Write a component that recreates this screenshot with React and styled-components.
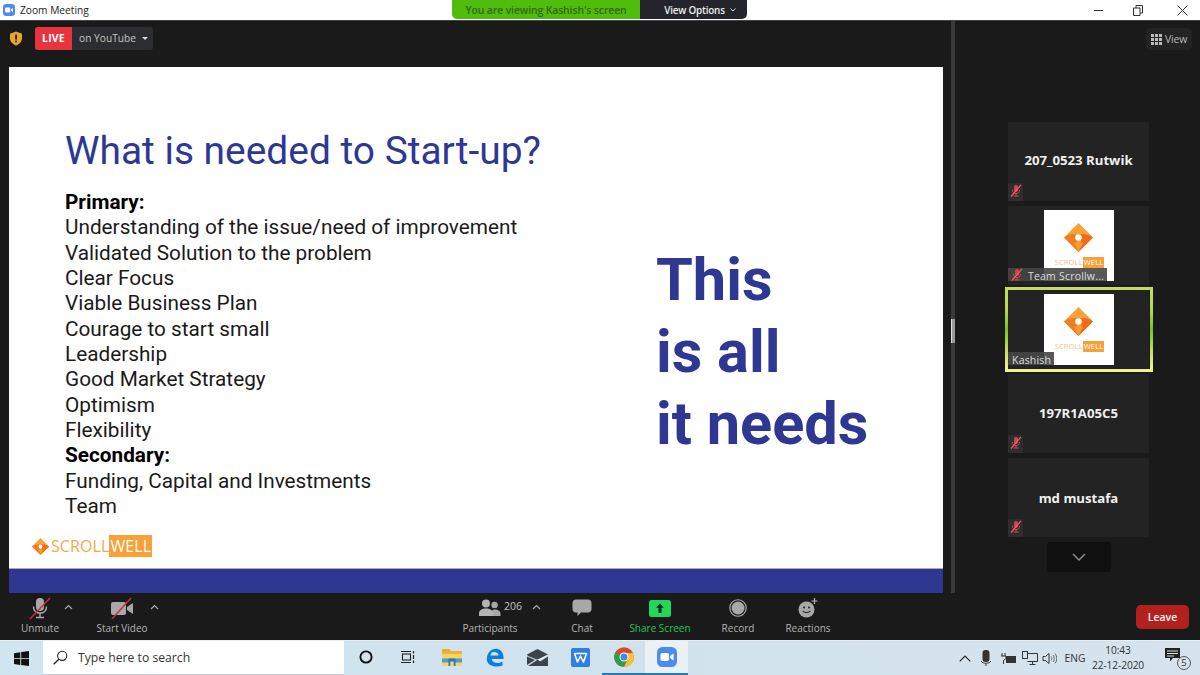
import React from "react";
import styled, { createGlobalStyle } from "styled-components";

const Global = createGlobalStyle`
  html, body { margin: 0; padding: 0; width: 1200px; height: 675px; overflow: hidden; background: #1a1a1a; }
  * { box-sizing: border-box; }
  body { font-family: "Open Sans", "Liberation Sans", sans-serif; }
`;

const Page = styled.div`
  width: 1200px; height: 675px; display: flex; flex-direction: column; position: relative; overflow: hidden;
`;
const TitleBar = styled.header`
  height: 20px; background: #fff; display: flex; align-items: center; padding-left: 3px; flex: none;
`;
const TitleText = styled.span`
  font: 400 10.2px/20px "Open Sans", sans-serif; color: #222; margin-left: 5px; flex: 1;
`;
const WinButton = styled.span`
  width: 40px; height: 20px; display: flex; align-items: center; justify-content: center; flex: none; margin-right: ${p => p.$mr || 0}px;
`;
const Banner = styled.div`
  position: absolute; top: 0; left: 452px; width: 295px; height: 19px; display: flex;
  border-radius: 0 0 5px 5px; overflow: hidden;
`;
const BannerGreen = styled.div`
  width: 188px; background: #50bd0c; color: #2a6b10; display: flex; align-items: center; justify-content: center;
  font: 600 10.4px "Open Sans", sans-serif; letter-spacing: -.1px;
`;
const BannerDark = styled.div`
  flex: 1; background: #23252b; color: #eee; display: flex; align-items: center; justify-content: center; gap: 5px; padding-left: 13px;
  font: 600 9.9px "Open Sans", sans-serif; letter-spacing: -.2px;
`;
const Main = styled.main`
  height: 573px; display: flex; background: #1a1a1a; flex: none; border-top: 1px solid #444; margin-top: 0;
`;
const Stage = styled.section`
  width: 951px; padding: 0 8px 0 9px; display: flex; flex-direction: column; flex: none;
`;
const TopBar = styled.div`
  height: 46px; display: flex; align-items: center; padding-bottom: 12px; flex: none;
`;
const LiveGroup = styled.div`
  margin-left: 12px; height: 23px; width: 118px; display: flex; background: #2c2d30; border-radius: 3px; overflow: hidden;
`;
const LiveTag = styled.span`
  width: 37px; background: #e8343c; color: #fff; display: flex; align-items: center; justify-content: center;
  font: 700 10.5px "Open Sans", sans-serif; letter-spacing: .2px;
`;
const LiveText = styled.span`
  flex: 1; color: #c4c4c4; display: flex; align-items: center; justify-content: center; gap: 6px; padding-left: 2px; font: 400 10.2px "Open Sans", sans-serif;
`;
const Caret = styled.span`
  width: 0; height: 0; border-left: 3px solid transparent; border-right: 3px solid transparent; border-top: 3.5px solid #ddd;
`;
const Slide = styled.article`
  height: 526px; background: #fff; display: flex; flex-direction: column; flex: none;
`;
const SlideBody = styled.div`
  flex: 1; display: grid; grid-template-columns: 648px 1fr; min-height: 0;
`;
const SlideLeft = styled.div`
  padding: 61px 0 0 56px;
`;
const SlideTitle = styled.h1`
  margin: 0 0 16px; font: 400 38.9px/46px Roboto, sans-serif; color: #2e3792; white-space: nowrap;
`;
const Points = styled.div`
  font: 400 20.75px/25.35px Roboto, sans-serif; color: #111;
`;
const Point = styled.div`
  font-weight: ${p => (p.$bold ? 700 : 400)}; white-space: nowrap; color: ${p => (p.$bold ? "#000" : "#1a1a1a")};
`;
const SlideRight = styled.div`
  padding-top: 177px; font: 700 59.5px/72px Roboto, sans-serif; color: #2e3792; margin-left: -1px;
`;
const FooterBand = styled.div`
  height: 25px; background: #2e3792; border-top: 1px solid #aab; flex: none;
`;
const BrandRow = styled.div`
  margin: 16px 0 0 -33px; height: 22px; display: flex; align-items: center;
`;
const BrandName = styled.span`
  margin-left: 2px; font: 400 ${p => p.$size}px/1 "Open Sans", sans-serif; color: ${p => p.$pale ? "#f1c685" : "#f3a94a"}; letter-spacing: .1px;
`;
const BrandWell = styled.span`
  background: #f7a137; color: #fff; font: 400 ${p => p.$size}px/1 "Open Sans", sans-serif;
  padding: ${p => p.$pad}px 1px; letter-spacing: .1px;
`;
const Divider = styled.div`
  width: 4px; background: #3a3a3a; flex: none; position: relative;
`;
const Grip = styled.span`
  position: absolute; left: 0; top: 298px; width: 4px; height: 24px; background: #9a9a9a; border-left: 1px solid #ddd;
`;
const Side = styled.aside`
  flex: 1; display: flex; flex-direction: column; padding-top: 7px; background: #1a1a1a;
`;
const ViewRow = styled.div`
  display: flex; justify-content: flex-end; padding-right: 8px; height: 22px; flex: none;
`;
const ViewBtn = styled.div`
  width: 46px; height: 22px; background: #232323; border-radius: 4px; display: flex; align-items: center; justify-content: center; gap: 3px;
  color: #b8b8b8; font: 400 10.5px "Open Sans", sans-serif; letter-spacing: -.2px;
`;
const Tiles = styled.div`
  margin: 72px 0 0 53px; width: 141px; display: flex; flex-direction: column; gap: 5px;
`;
const Tile = styled.div`
  height: 79px; background: #232323; position: relative; display: flex; justify-content: center;
  align-items: ${p => (p.$thumb ? "flex-start" : "center")}; padding-top: ${p => (p.$thumb ? 4 : 0)}px;
  &::after {
    content: ${p => (p.$active ? '""' : "none")}; position: absolute; inset: -3px -4px -3px -3px; border: 3px solid;
    border-image: linear-gradient(#c4dc60, #b6d94a 25%, #7cc41c 50%, #c8e060 78%, #f2f48e) 1;
  }
`;
const TileName = styled.span`
  color: #f0f0f0; font: 700 13.2px "Open Sans", sans-serif; margin-top: ${p => p.$dy || 0}px;
`;
const MuteBadge = styled.span`
  position: absolute; left: 0; bottom: 0; width: 15px; height: 18px; background: #2e2e2e; display: flex; align-items: center; justify-content: center;
`;
const Thumb = styled.div`
  width: 70px; height: 71px; background: #fff; display: flex; flex-direction: column; align-items: center; padding-top: 13px;
`;
const ThumbText = styled.div`
  display: flex; margin-top: 5px; align-items: center;
`;
const NameTag = styled.span`
  position: absolute; left: 0; bottom: 4px; height: 13px; padding: 3px 3px 0 ${p => (p.$pad ? 3 : 4)}px; background: rgba(70,70,70,.9);
  color: #ddd; font: 400 10.5px/13px "Open Sans", sans-serif; display: flex; align-items: center; gap: 5px; white-space: nowrap; letter-spacing: .2px;
`;
const MoreBtn = styled.div`
  margin: 5px 0 0 92px; width: 64px; height: 30px; background: #101010; border-radius: 3px; display: flex; align-items: center; justify-content: center;
`;
const Toolbar = styled.div`
  height: 47px; background: #1a1a1a; display: flex; align-items: stretch; flex: none; position: relative;
`;
const ToolItem = styled.div`
  width: ${p => p.$w}px; margin-left: ${p => p.$ml || 0}px; display: flex; flex-direction: column; align-items: center; flex: none;
`;
const ToolIcon = styled.div`
  height: 26px; display: flex; align-items: center; justify-content: center; gap: 5px; padding-top: 4px; position: relative;
`;
const ToolLabel = styled.span`
  font: 400 10px/14px "Open Sans", sans-serif; color: ${p => (p.$green ? "#22c55a" : "#b4b4b4")}; white-space: nowrap; margin-top: 2px;
`;
const Count = styled.span`
  position: absolute; left: 25px; top: 6px; font: 400 10.5px "Open Sans", sans-serif; color: #c4c4c4;
`;
const Up = styled.svg`
  position: absolute; left: ${p => p.$x}px; top: 11px;
`;
const LeaveBtn = styled.div`
  margin: 12px 11px 11px auto; width: 53px; background: #b3211f; border-radius: 5px; color: #f5f5f5; display: flex; align-items: center; justify-content: center;
  font: 600 10.5px "Open Sans", sans-serif;
`;
const Taskbar = styled.footer`
  flex: 1; background: linear-gradient(90deg, #cfe6f0, #d1e2ed 55%, #d6e3ee); display: flex; align-items: stretch; border-top: 1px solid #e8eef2;
`;
const StartCell = styled.div`
  width: 43px; display: flex; align-items: center; justify-content: center; flex: none;
`;
const SearchBox = styled.div`
  width: 301px; background: #fff; display: flex; align-items: center; padding-left: 10px; gap: 10px; border-bottom: 1px solid #ccd;
  color: #333; font: 400 12.2px "Open Sans", sans-serif; flex: none;
`;
const TaskCell = styled.div`
  width: 43px; flex: none; display: flex; align-items: center; justify-content: center; position: relative;
  background: ${p => (p.$active ? "#eaf2f7" : "transparent")};
  border-bottom: 2px solid ${p => (p.$open ? "#2a78bb" : "transparent")};
`;
const Tray = styled.div`
  margin-left: auto; display: flex; align-items: center; color: #333; flex: none; padding-right: 9px;
`;
const TrayIcon = styled.span`
  display: flex; justify-content: center; width: ${p => p.$w}px; flex: none;
`;
const Lang = styled.span`
  font: 400 10.3px "Open Sans", sans-serif; width: 36px; text-align: center;
`;
const Clock = styled.div`
  width: 58px; margin: 0 10px 0 -4px; text-align: center; font: 400 10.2px/15px "Open Sans", sans-serif; letter-spacing: -.1px;
`;
const Notify = styled.div`
  width: 28px; height: 24px; position: relative; margin-left: 6px;
`;
const NotifyNum = styled.span`
  position: absolute; right: 0; bottom: 0; width: 14px; height: 14px; border: 1px solid #555; border-radius: 50%;
  font: 400 9.5px/12px "Open Sans", sans-serif; text-align: center; color: #333; background: #d6e3ee;
`;

const ZoomLogo = ({ size = 12 }) => (
  <svg width={size} height={size} viewBox="0 0 20 20">
    <rect width="20" height="20" rx="5.5" fill="#4a8cf0" />
    <rect x="3.5" y="6" width="8.5" height="8" rx="1.8" fill="#fff" />
    <path d="M13 9l3.6-2.6v7.2L13 11z" fill="#fff" />
  </svg>
);
const Shield = () => (
  <svg width="14" height="15" viewBox="0 0 14 15">
    <path d="M7 .5l6 2.2v4.6c0 3.6-2.6 6-6 7.2-3.4-1.2-6-3.6-6-7.2V2.7z" fill="#e9a52c" />
    <rect x="6.2" y="3.6" width="1.7" height="5" fill="#26221a" />
    <rect x="6.2" y="9.6" width="1.7" height="1.7" fill="#26221a" />
  </svg>
);
const MiniMute = () => (
  <svg width="12" height="13" viewBox="0 0 12 13" style={{ flex: "none", marginTop: -3 }}>
    <rect x="4" y="1" width="4" height="7" rx="2" fill="#d8424c" />
    <path d="M2.5 6c0 2.4 1.5 3.6 3.5 3.6S9.5 8.4 9.5 6M6 9.6V12M3.5 12h5" stroke="#d8424c" fill="none" strokeWidth="1" />
    <path d="M1 12.5L11 .8" stroke="#f2616b" strokeWidth="1.2" />
  </svg>
);
const Diamond = ({ size }) => (
  <svg width={size} height={size} viewBox="0 0 30 30" style={{ flex: "none" }}>
    <path d="M15 0l15 15-15 15L0 15z" fill="#f7a137" />
    <path d="M0 15c6-4 10-4 15-3l-2 6 2 12z" fill="#ef7d1d" />
    <path d="M30 15c-6-4-10-4-15-3l3 6-3 12z" fill="#f26a1b" />
    <path d="M15 30l-5-10 5 1 5-1z" fill="#f89b2e" />
    <circle cx="15" cy="15" r="3.4" fill="#fff" />
  </svg>
);
const ThumbLogo = () => (
  <Thumb>
    <Diamond size={29} />
    <ThumbText>
      <BrandName $size={7.6} $pale>SCROLL</BrandName>
      <BrandWell $size={7.6} $pad={1.5}>WELL</BrandWell>
    </ThumbText>
  </Thumb>
);
const Chevron = ({ x }) => (
  <Up $x={x} width="9" height="6" viewBox="0 0 9 6">
    <path d="M1 5l3.5-3.5L8 5" fill="none" stroke="#aaa" strokeWidth="1.2" />
  </Up>
);

const MicOff = () => (
  <svg width="24" height="23" viewBox="0 0 24 23">
    <rect x="8" y="1" width="8" height="13" rx="4" fill="#a8a8a8" />
    <path d="M5.5 9.5c0 4.2 2.8 6.6 6.5 6.6s6.5-2.4 6.5-6.6M12 16v4M8 20.5h8" fill="none" stroke="#a8a8a8" strokeWidth="1.5" />
    <path d="M2 22L22 1" stroke="#c4313f" strokeWidth="1.5" />
  </svg>
);
const VideoOff = () => (
  <svg width="24" height="22" viewBox="0 0 24 22">
    <rect x="1" y="5" width="15" height="13" rx="2" fill="#a8a8a8" />
    <path d="M17 10l6-4v11l-6-4z" fill="#a8a8a8" />
    <path d="M2 22L21 1" stroke="#c4313f" strokeWidth="1.5" />
  </svg>
);
const People = () => (
  <svg width="22" height="18" viewBox="0 0 22 18">
    <circle cx="15.6" cy="6" r="3.2" fill="#a8a8a8" />
    <path d="M12 17c0-5 1-6.5 4-6.5s5.500 1.500 5.500 4.500v2z" fill="#a8a8a8" />
    <circle cx="7" cy="4.500" r="4" fill="#b4b4b4" />
    <path d="M0 17v-2.500C0 11 3 9.500 7 9.500s7 1.500 7 5V17z" fill="#b4b4b4" />
  </svg>
);
const ChatIcon = () => (
  <svg width="20" height="18" viewBox="0 0 20 18">
    <path d="M4 .5h12c2 0 3.500 1.500 3.500 3.500v6c0 2-1.500 3.500-3.500 3.500H9L5.500 17v-3.500H4C2 13.500.5 12 .5 10V4C.5 2 2 .5 4 .5z" fill="#a8a8a8" />
  </svg>
);
const ShareIcon = () => (
  <svg width="22" height="17" viewBox="0 0 22 17">
    <rect width="22" height="17" rx="2.500" fill="#22d85c" />
    <path d="M11 3.500l3.800 4.200h-2.300V13h-3V7.700H7.200z" fill="#0c2a16" />
  </svg>
);
const RecordIcon = () => (
  <svg width="18" height="18" viewBox="0 0 18 18">
    <circle cx="9" cy="9" r="8.200" fill="none" stroke="#b4b4b4" strokeWidth="1.100" />
    <circle cx="9" cy="9" r="6.500" fill="#a8a8a8" />
  </svg>
);
const ReactIcon = () => (
  <svg width="20" height="20" viewBox="0 0 20 20">
    <circle cx="8.500" cy="11.500" r="8" fill="#a8a8a8" />
    <circle cx="6" cy="9.500" r="1" fill="#1a1a1a" />
    <circle cx="11" cy="9.500" r="1" fill="#1a1a1a" />
    <path d="M4.800 13c1 2 6.400 2 7.400 0" stroke="#1a1a1a" fill="none" strokeWidth="1.100" />
    <path d="M16.500 0v6M13.500 3h6" stroke="#b4b4b4" strokeWidth="1.200" />
  </svg>
);

const WinIcon = () => (
  <svg width="15" height="15" viewBox="0 0 15 15">
    <path d="M0 2.200L6.300 1.200v6H0zM7.200 1l7.800-1v7.200H7.200zM0 8h6.300v6L0 13zM7.200 8H15v7l-7.800-1.100z" fill="#111" />
  </svg>
);
const Magnifier = () => (
  <svg width="15" height="15" viewBox="0 0 15 15">
    <circle cx="9.200" cy="5.800" r="4.600" fill="none" stroke="#222" strokeWidth="1.100" />
    <path d="M5.800 9.200L.7 14.300" stroke="#222" strokeWidth="1.300" />
  </svg>
);
const Cortana = () => (
  <svg width="14" height="14" viewBox="0 0 14 14"><circle cx="7" cy="7" r="5.600" fill="none" stroke="#111" strokeWidth="1.900" /></svg>
);
const TaskView = () => (
  <svg width="16" height="14" viewBox="0 0 16 14">
    <path d="M0 1.500h10M0 12.500h10" stroke="#222" strokeWidth="1.200" />
    <rect x="1.500" y="4" width="8" height="6" fill="none" stroke="#222" strokeWidth="1.100" />
    <path d="M12.500 1v2.500M12.500 5v4M12.500 10.500V13" stroke="#222" strokeWidth="1.200" />
  </svg>
);
const Explorer = () => (
  <svg width="20" height="17" viewBox="0 0 20 17">
    <path d="M0 1.500C0 .7.700 0 1.500 0H7l2 2h-9z" fill="#e9a92e" />
    <rect y="2" width="20" height="4" fill="#e9b43c" />
    <rect y="5" width="20" height="12" fill="#fbd363" />
    <rect x="0" y="9.500" width="20" height="4" fill="#4a9fd8" />
    <rect x="6.500" y="9.500" width="7" height="7.500" fill="#2a76b8" />
    <rect x="8.300" y="12.500" width="3.400" height="4.500" fill="#f7d774" />
  </svg>
);
const Edge = () => (
  <svg width="18" height="19" viewBox="0 0 18 19">
    <path d="M1 9C2 3.500 6 .7 10 .7c4.500 0 7.500 3.500 7.500 8.800V11H5.700c.3 3.500 5.300 5.400 10.800 2.400v4C10 20 .2 18 .8 10.300 1.300 7 3.500 5.200 6 4.500 5 5.500 4.500 6.500 4.500 7.500h8c0-4.500-8-5.500-11.500 1.500z" fill="#0d7fd8" />
  </svg>
);
const Mail = () => (
  <svg width="21" height="17" viewBox="0 0 21 17">
    <path d="M0 5.500L10.500 0 21 5.500 10 11 1 7z" fill="#3b444b" />
    <path d="M0 7.500L8 11 0 16zM21 7.500V17H1l9.500-6.200 3 1.500z" fill="#3b444b" />
    <path d="M1 7l9 4 11-5.500-8 6.200z" fill="#e3edf3" />
  </svg>
);
const Wps = () => (
  <svg width="19" height="19" viewBox="0 0 19 19">
    <rect width="19" height="19" rx="2" fill="#2f7fe0" />
    <path d="M3.500 5.500h12L12.500 14l-3-6-3 6z" fill="none" stroke="#fff" strokeWidth="1.600" strokeLinejoin="round" />
  </svg>
);
const Chrome = () => (
  <svg width="20" height="20" viewBox="0 0 20 20">
    <circle cx="10" cy="10" r="9.800" fill="#e2452f" />
    <path d="M10 10L1.500 5A9.800 9.800 0 0 0 10 19.800l5-9.800z" fill="#2f9e48" />
    <path d="M10 6h9a9.800 9.800 0 0 1-9 13.800L14 12z" fill="#f7c42d" />
    <circle cx="10" cy="10" r="4.500" fill="#fff" />
    <circle cx="10" cy="10" r="3.500" fill="#4a86e8" />
  </svg>
);
const Volume = () => (
  <svg width="15" height="13" viewBox="0 0 15 13">
    <path d="M1 4.500h2.500L7 1.500v10l-3.500-3H1z" fill="none" stroke="#333" strokeWidth="1" />
    <path d="M9 4.500c1 1 1 3 0 4M11 3c1.700 2 1.700 5 0 7M13 1.500c2.300 3 2.300 7 0 10" fill="none" stroke="#555" strokeWidth=".9" />
  </svg>
);

const points = [
  ["Primary:", true],
  ["Understanding of the issue/need of improvement"],
  ["Validated Solution to the problem"],
  ["Clear Focus"],
  ["Viable Business Plan"],
  ["Courage to start small"],
  ["Leadership"],
  ["Good Market Strategy"],
  ["Optimism"],
  ["Flexibility"],
  ["Secondary:", true],
  ["Funding, Capital and Investments"],
  ["Team"],
];

export default function App() {
  return (
    <Page>
      <Global />
      <TitleBar>
        <ZoomLogo />
        <TitleText>Zoom Meeting</TitleText>
        <WinButton>
          <svg width="9" height="9" viewBox="0 0 9 9"><path d="M0 4.500h9" stroke="#333" /></svg>
        </WinButton>
        <WinButton $mr={4}>
          <svg width="10" height="11" viewBox="0 0 10 11"><path d="M.5 3h6.500v7.500H.5zM3 3V.5h6.500V8H7" fill="none" stroke="#333" /></svg>
        </WinButton>
        <WinButton $mr={-2}>
          <svg width="11" height="11" viewBox="0 0 11 11"><path d="M.5.5l10 10M10.500.5l-10 10" stroke="#333" /></svg>
        </WinButton>
      </TitleBar>
      <Banner>
        <BannerGreen>You are viewing Kashish's screen</BannerGreen>
        <BannerDark>
          View Options
          <svg width="6" height="4" viewBox="0 0 6 4"><path d="M.5.500L3 3 5.500.5" fill="none" stroke="#ddd" /></svg>
        </BannerDark>
      </Banner>
      <Main>
        <Stage>
          <TopBar>
            <Shield />
            <LiveGroup>
              <LiveTag>LIVE</LiveTag>
              <LiveText>on YouTube <Caret /></LiveText>
            </LiveGroup>
          </TopBar>
          <Slide>
            <SlideBody>
              <SlideLeft>
                <SlideTitle>What is needed to Start-up?</SlideTitle>
                <Points>
                  {points.map(([text, bold]) => (
                    <Point key={text} $bold={bold}>{text}</Point>
                  ))}
                </Points>
                <BrandRow>
                  <Diamond size={17} />
                  <BrandName $size={16}>SCROLL</BrandName>
                  <BrandWell $size={16} $pad={3}>WELL</BrandWell>
                </BrandRow>
              </SlideLeft>
              <SlideRight>
                This<br />is all<br />it needs
              </SlideRight>
            </SlideBody>
            <FooterBand />
          </Slide>
        </Stage>
        <Divider><Grip /></Divider>
        <Side>
          <ViewRow>
            <ViewBtn>
              <svg width="11" height="11" viewBox="0 0 11 11">
                <path d="M0 0h3v3H0zM4 0h3v3H4zM8 0h3v3H8zM0 4h3v3H0zM4 4h3v3H4zM8 4h3v3H8zM0 8h3v3H0zM4 8h3v3H4zM8 8h3v3H8z" fill="#bbb" />
              </svg>
              View
            </ViewBtn>
          </ViewRow>
          <Tiles>
            <Tile>
              <TileName $dy={-4}>207_0523 Rutwik</TileName>
              <MuteBadge><MiniMute /></MuteBadge>
            </Tile>
            <Tile $thumb>
              <ThumbLogo />
              <NameTag $pad><MiniMute />Team Scrollw...</NameTag>
            </Tile>
            <Tile $thumb $active>
              <ThumbLogo />
              <NameTag>Kashish</NameTag>
            </Tile>
            <Tile>
              <TileName $dy={-2}>197R1A05C5</TileName>
              <MuteBadge><MiniMute /></MuteBadge>
            </Tile>
            <Tile>
              <TileName $dy={1}>md mustafa</TileName>
              <MuteBadge><MiniMute /></MuteBadge>
            </Tile>
          </Tiles>
          <MoreBtn>
            <svg width="14" height="8" viewBox="0 0 14 8"><path d="M1 1l6 6 6-6" fill="none" stroke="#8a8a8a" strokeWidth="1.500" /></svg>
          </MoreBtn>
        </Side>
      </Main>
      <Toolbar>
        <ToolItem $w={80}>
          <ToolIcon><MicOff /></ToolIcon>
          <ToolLabel>Unmute</ToolLabel>
        </ToolItem>
        <Chevron x={64} />
        <ToolItem $w={80} $ml={2}>
          <ToolIcon><VideoOff /></ToolIcon>
          <ToolLabel>Start Video</ToolLabel>
        </ToolItem>
        <Chevron x={150} />
        <ToolItem $w={78} $ml={289}>
          <ToolIcon><People /><Count>206</Count></ToolIcon>
          <ToolLabel>Participants</ToolLabel>
        </ToolItem>
        <Chevron x={532} />
        <ToolItem $w={78} $ml={14}>
          <ToolIcon><ChatIcon /></ToolIcon>
          <ToolLabel>Chat</ToolLabel>
        </ToolItem>
        <ToolItem $w={78}>
          <ToolIcon><ShareIcon /></ToolIcon>
          <ToolLabel $green>Share Screen</ToolLabel>
        </ToolItem>
        <ToolItem $w={78}>
          <ToolIcon><RecordIcon /></ToolIcon>
          <ToolLabel>Record</ToolLabel>
        </ToolItem>
        <ToolItem $w={62}>
          <ToolIcon><ReactIcon /></ToolIcon>
          <ToolLabel>Reactions</ToolLabel>
        </ToolItem>
        <LeaveBtn>Leave</LeaveBtn>
      </Toolbar>
      <Taskbar>
        <StartCell><WinIcon /></StartCell>
        <SearchBox><Magnifier />Type here to search</SearchBox>
        <TaskCell><Cortana /></TaskCell>
        <TaskCell><TaskView /></TaskCell>
        <TaskCell><Explorer /></TaskCell>
        <TaskCell><Edge /></TaskCell>
        <TaskCell><Mail /></TaskCell>
        <TaskCell><Wps /></TaskCell>
        <TaskCell $open><Chrome /></TaskCell>
        <TaskCell $open $active><ZoomLogo size={20} /></TaskCell>
        <Tray>
          <TrayIcon $w={20}>
            <svg width="12" height="7" viewBox="0 0 12 7"><path d="M.7 6.300L6 1l5.300 5.300" fill="none" stroke="#222" strokeWidth="1.100" /></svg>
          </TrayIcon>
          <TrayIcon $w={22}>
            <svg width="10" height="16" viewBox="0 0 10 16"><rect x="1.500" width="7" height="12" rx="3" fill="#333" /><path d="M0 11c1 3 9 3 10 0M5 14v2" stroke="#333" fill="none" /></svg>
          </TrayIcon>
          <TrayIcon $w={22}>
            <svg width="15" height="11" viewBox="0 0 15 11"><rect x="5" y="3" width="10" height="7" fill="#333" /><path d="M1 0v3M4 0v3M0 3h5v2.500L2.500 7.500V11" fill="none" stroke="#333" /></svg>
          </TrayIcon>
          <TrayIcon $w={22}>
            <svg width="16" height="14" viewBox="0 0 16 14"><rect x=".5" y=".5" width="5" height="7" fill="none" stroke="#333" /><path d="M5.500 2.500h10v8h-10M10.500 10.500V13M7.500 13.500h6" fill="none" stroke="#333" /></svg>
          </TrayIcon>
          <TrayIcon $w={16}><Volume /></TrayIcon>
          <Lang>ENG</Lang>
          <Clock>10:43<br />22-12-2020</Clock>
          <Notify>
            <svg width="15" height="14" viewBox="0 0 15 14" style={{ position: "absolute", left: 2, top: 2 }}>
              <path d="M0 0h15v10H8l-3 3.500V10H0z" fill="#222" />
              <path d="M2 3h11M2 5.500h11M2 8h7" stroke="#d6e3ee" />
            </svg>
            <NotifyNum>5</NotifyNum>
          </Notify>
        </Tray>
      </Taskbar>
    </Page>
  );
}
